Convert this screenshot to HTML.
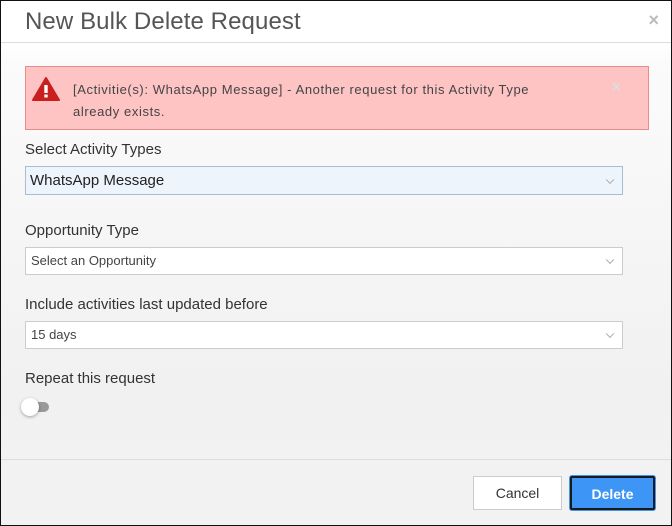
<!DOCTYPE html>
<html><head><style>
*{box-sizing:border-box;margin:0;padding:0}
body{width:672px;height:526px;overflow:hidden;font-family:"Liberation Sans",sans-serif;background:#fff}
.frame{position:absolute;left:0;top:0;width:672px;height:526px;border:1px solid #111;background:linear-gradient(#fff 0,#fff 42px,#fbfbfb 60px,#f1f1f1 380px,#f2f2f2 100%)}
.t{position:absolute;font-size:24px;color:#555;left:24px;top:7px;letter-spacing:0.1px}
.x{position:absolute;right:12px;top:9px;color:#bbb;font-size:18px;font-weight:bold}
.hl{position:absolute;left:0;right:0;top:41px;border-top:1px solid #ddd}
.al{position:absolute;left:24px;top:65px;width:624px;height:64px;background:#fec4c4;border:1px solid #ea8a8a}
.al .m{position:absolute;left:47px;top:12px;font-size:13px;line-height:22px;color:#444;letter-spacing:0.6px}
.al .c{position:absolute;right:27px;top:12px;color:#ddd;font-size:16px;font-weight:bold}
.lb{position:absolute;left:24px;font-size:15px;color:#333}
.sel{position:absolute;left:24px;width:598px;border:1px solid #ccc;background:#fff;font-size:13px;color:#444;padding-left:5px}
.sel:after{content:"";position:absolute;right:9px;top:50%;width:5px;height:5px;border-right:1px solid #aaa;border-bottom:1px solid #aaa;transform:translateY(-70%) rotate(45deg)}
.fl{position:absolute;left:0;right:0;top:458px;border-top:1px solid #ddd}
.btn{position:absolute;top:475px;height:34px;font-size:14px;text-align:center;line-height:32px}
</style></head><body><div class="frame">
<div class="t">New Bulk Delete Request</div>
<div class="x">×</div>
<div class="hl"></div>
<div class="al">
<svg style="position:absolute;left:6px;top:10px" width="28" height="24" viewBox="0 0 28 24"><path d="M14 1 L27 23 L1 23 Z" fill="#c9201f" stroke="#c9201f" stroke-linejoin="round" stroke-width="2"/><rect x="12.3" y="8" width="3.4" height="8" fill="#fff"/><rect x="12.3" y="17.5" width="3.4" height="3" fill="#fff"/></svg>
<div class="m">[Activitie(s): WhatsApp Message] - Another request for this Activity Type<br>already exists.</div>
<div class="c">×</div>
</div>
<div class="lb" style="top:140px">Select Activity Types</div>
<div class="sel" style="top:165px;height:29px;line-height:27px;font-size:15px;color:#222;background:#eef4fc;border-color:#a8bdd4;padding-left:4px">WhatsApp Message</div>
<div class="lb" style="top:221px">Opportunity Type</div>
<div class="sel" style="top:246px;height:28px;line-height:26px">Select an Opportunity</div>
<div class="lb" style="top:295px">Include activities last updated before</div>
<div class="sel" style="top:320px;height:28px;line-height:26px">15 days</div>
<div class="lb" style="top:369px">Repeat this request</div>
<div style="position:absolute;left:25px;top:401px;width:23px;height:10px;border-radius:5px;background:#999"></div>
<div style="position:absolute;left:20px;top:397px;width:18px;height:18px;border-radius:50%;background:#fff;box-shadow:0 1px 3px rgba(0,0,0,.35)"></div>
<div class="fl"></div>
<div class="btn" style="left:472px;width:89px;border:1px solid #ccc;background:#fff;color:#333">Cancel</div>
<div class="btn" style="left:569px;width:85px;background:#3d95f5;color:#fff;font-weight:bold;border:2px solid #1a1a1a;box-shadow:0 0 0 1px #3d95f5;border-radius:2px">Delete</div>
</div></body></html>
